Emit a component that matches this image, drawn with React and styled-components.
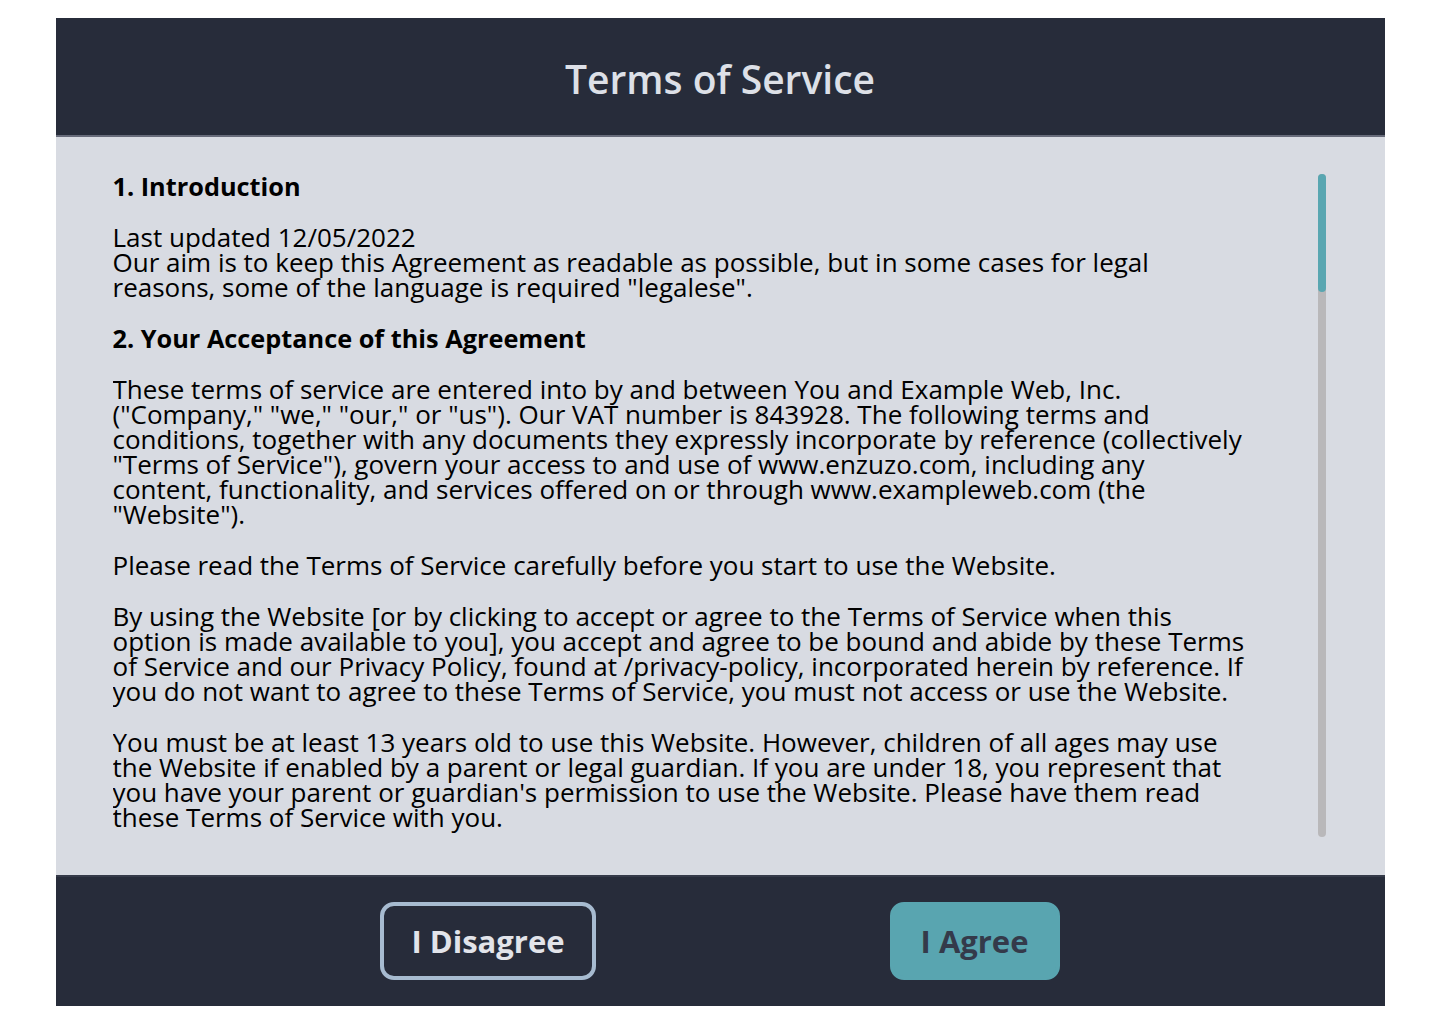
import React from 'react'
import styled, { createGlobalStyle } from 'styled-components'

const sections = [
  {
    title: '1. Introduction',
    paragraphs: [
      [
        'Last updated 12/05/2022',
        'Our aim is to keep this Agreement as readable as possible, but in some cases for legal reasons, some of the language is required "legalese".',
      ],
    ],
  },
  {
    title: '2. Your Acceptance of this Agreement',
    paragraphs: [
      [
        'These terms of service are entered into by and between You and Example Web, Inc. ("Company," "we," "our," or "us"). Our VAT number is 843928. The following terms and conditions, together with any documents they expressly incorporate by reference (collectively "Terms of Service"), govern your access to and use of www.enzuzo.com, including any content, functionality, and services offered on or through www.exampleweb.com (the "Website").',
      ],
      ['Please read the Terms of Service carefully before you start to use the Website.'],
      [
        'By using the Website [or by clicking to accept or agree to the Terms of Service when this option is made available to you], you accept and agree to be bound and abide by these Terms of Service and our Privacy Policy, found at /privacy-policy, incorporated herein by reference. If you do not want to agree to these Terms of Service, you must not access or use the Website.',
      ],
      [
        "You must be at least 13 years old to use this Website. However, children of all ages may use the Website if enabled by a parent or legal guardian. If you are under 18, you represent that you have your parent or guardian's permission to use the Website. Please have them read these Terms of Service with you.",
      ],
      [
        "If you are a parent or legal guardian of a user under the age of 18, by allowing your child to use the Website, you are subject to the terms of these Terms of Service and responsible for your child's activity on the Website.",
      ],
    ],
  },
  {
    title: '3. Changes to the Terms of Service',
    paragraphs: [
      [
        'We may revise and update these Terms of Service from time to time in our sole discretion. All changes are effective immediately when we post them, and apply to all access to and use of the Website thereafter.',
      ],
      [
        'Your continued use of the Website following the posting of revised Terms of Service means that you accept and agree to the changes.',
      ],
    ],
  },
  {
    title: '4. Accessing the Website and Account Security',
    paragraphs: [
      [
        'We reserve the right to withdraw or amend this Website, and any service or material we provide on the Website, in our sole discretion without notice. We will not be liable if for any reason all or any part of the Website is unavailable at any time or for any period.',
      ],
    ],
  },
  {
    title: '5. Intellectual Property Rights',
    paragraphs: [
      [
        'The Website and its entire contents, features, and functionality are owned by the Company, its licensors, or other providers of such material and are protected by copyright, trademark, patent, trade secret, and other intellectual property laws.',
      ],
    ],
  },
]

function App() {
  return (
    <>
      <GlobalStyle />
      <Modal>
        <Header>
          <Title>Terms of Service</Title>
        </Header>
        <Body>
          <Scroller>
            {sections.map((s) => (
              <Section key={s.title}>
                <Heading>{s.title}</Heading>
                {s.paragraphs.map((lines, i) => (
                  <Paragraph key={i}>
                    {lines.map((line, j) => (
                      <span key={j}>
                        {line}
                        {j < lines.length - 1 && <br />}
                      </span>
                    ))}
                  </Paragraph>
                ))}
              </Section>
            ))}
          </Scroller>
          <Track>
            <Thumb />
          </Track>
        </Body>
        <Footer>
          <Button>I Disagree</Button>
          <Button primary>I Agree</Button>
        </Footer>
      </Modal>
    </>
  )
}

export default App

const GlobalStyle = createGlobalStyle`
    html, body {
        margin: 0;
        padding: 0;
        background: #ffffff;
    }
    body {
        font-family: "Open Sans", "Noto Sans", sans-serif;
    }
    *{
        box-sizing: border-box;
    }
`

const Modal = styled.div`
    width: 1329px;
    height: 988px;
    margin: 18px auto 0;
    display: flex;
    flex-direction: column;
    background-color: #272c3a;
`

const Header = styled.div`
    height: 119px;
    flex-shrink: 0;
    display: flex;
    align-items: center;
    justify-content: center;
    border-bottom: 2px solid #676b7a;
    padding-top: 3px;
`

const Title = styled.h1`
    margin: 0;
    font-size: 39px;
    font-weight: 600;
    color: #dde0e7;
`

const Body = styled.div`
    flex: 1;
    min-height: 0;
    background-color: #d8dbe2;
    padding: 37px 59px 38px 57px;
    display: flex;
`

const Scroller = styled.div`
    flex: 1;
    overflow-y: auto;
    scrollbar-width: none;
    padding-right: 71px;
    color: #000000;
    font-size: 26px;
    line-height: 25px;
`

const Track = styled.div`
    width: 8px;
    flex-shrink: 0;
    border-radius: 4px;
    background-color: #b9b8ba;
    display: flex;
    flex-direction: column;
`

const Thumb = styled.div`
    height: 118px;
    border-radius: 4px;
    background-color: #59a6b1;
`

const Section = styled.section``

const Heading = styled.h2`
    margin: 0 0 26px;
    font-size: 25.3px;
    line-height: 25px;
    font-weight: 700;
`

const Paragraph = styled.p`
    margin: 0 0 26px;
`

const Footer = styled.div`
    height: 131px;
    flex-shrink: 0;
    display: flex;
    align-items: center;
    justify-content: center;
    gap: 294px;
    box-shadow: inset 0 2px 0 #353a49;
`

const Button = styled.button`
    height: 78px;
    padding: 0 27px;
    border-radius: 14px;
    border: 4px solid ${(props) => (props.primary ? '#59a5b0' : '#a7bbd0')};
    background-color: ${(props) => (props.primary ? '#59a5b0' : 'transparent')};
    color: ${(props) => (props.primary ? '#343a4a' : '#e2e4ea')};
    font-family: "Open Sans", "Noto Sans", sans-serif;
    font-size: 31px;
    font-weight: 700;
    cursor: pointer;
`
